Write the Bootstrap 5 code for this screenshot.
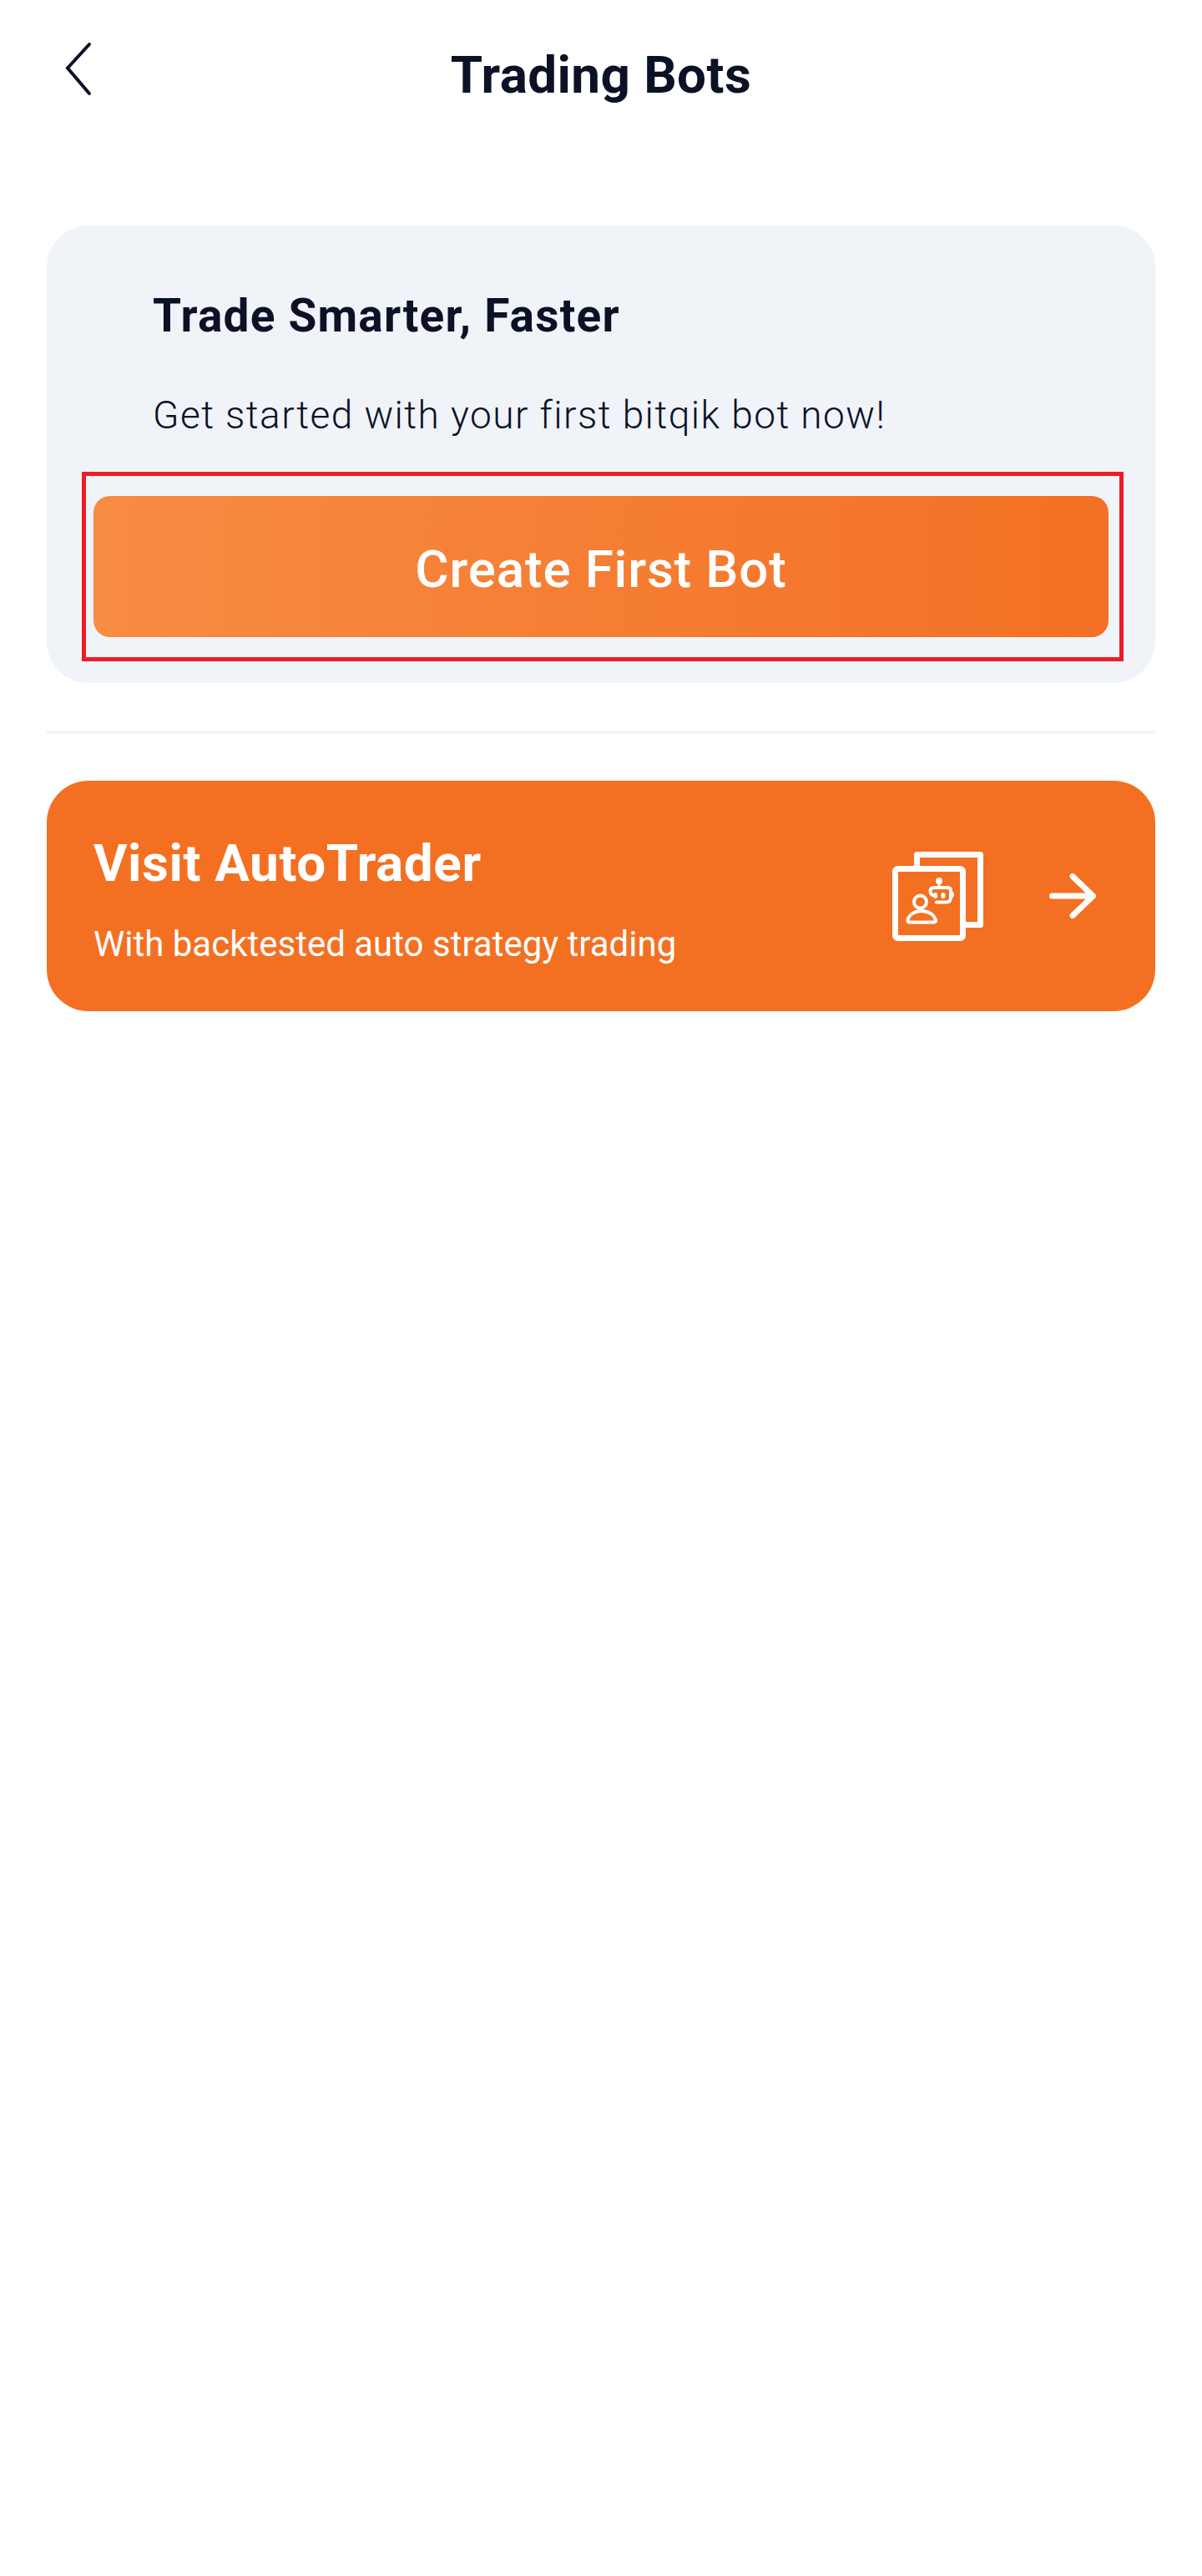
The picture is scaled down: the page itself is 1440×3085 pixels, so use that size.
<!DOCTYPE html>
<html lang="en">
<head>
    <meta charset="UTF-8">
    <meta name="viewport" content="width=device-width, initial-scale=1.0">
    <title>Trading Bots</title>
    <link rel="stylesheet" href="https://cdn.jsdelivr.net/npm/bootstrap@5.3.0/dist/css/bootstrap.min.css">
    <script src="https://cdn.jsdelivr.net/npm/bootstrap@5.3.0/dist/js/bootstrap.bundle.min.js"></script>
    <style>
        body { background: #fff; color: #0b1226; font-family: Roboto, "Liberation Sans", sans-serif; }
        .page-wrap { padding: 59px 56px 0; }
        .back-btn { position: absolute; left: 78px; top: 50px; line-height: 0; }
        .page-title { font-size: 62px; font-weight: 700; line-height: 1; margin: 0; letter-spacing: .4px; }
        .start-card { background: #f0f3f8; border-radius: 50px; height: 548px; margin-top: 149px; padding: 76px 56px 0; }
        .start-title { font-size: 55px; font-weight: 700; line-height: 64px; margin: 0 0 0 71px; letter-spacing: 1.2px; }
        .start-text { font-size: 46px; line-height: 56px; margin: 59px 0 0 71px; letter-spacing: 1.45px; font-weight: 300; }
        .create-btn { background: linear-gradient(90deg, #f78c43, #f37024); color: #fff; border: 0; border-radius: 20px; width: 100%; height: 169px; margin-top: 69px; padding-top: 12px; font-size: 62px; font-weight: 500; letter-spacing: .8px; }
        .create-btn:hover { background: linear-gradient(90deg, #f78c43, #f37024); color: #fff; }
        .red-mark { position: absolute; left: 98px; top: 565px; width: 1248px; height: 227px; border: 5px solid #ee1c25; pointer-events: none; }
        .rule-line { height: 4px; background: #f3f4f6; margin-top: 57px; }
        .auto-card { background: #f37022; color: #fff; border-radius: 50px; height: 276px; margin-top: 56px; padding: 0 71px 0 56px; }
        .auto-copy { margin-top: 8px; }
        .auto-title { font-size: 62px; font-weight: 700; line-height: 72px; letter-spacing: .6px; margin: 0; }
        .auto-text { font-size: 42px; line-height: 50px; margin: 36px 0 0; letter-spacing: 0; font-weight: 400; }
        .auto-icons { gap: 79px; }
    </style>
</head>
<body>
<div class="page-wrap position-relative">
    <a class="back-btn" href="#" aria-label="Back">
        <svg width="32" height="66" viewBox="0 0 32 66" fill="none" stroke="#0b1226" stroke-width="4" stroke-linecap="round" stroke-linejoin="miter">
            <path d="M29 3 L3 31.5 L29 62"/>
        </svg>
    </a>
    <div class="d-flex justify-content-center">
        <h1 class="page-title">Trading Bots</h1>
    </div>
    <div class="start-card">
        <h2 class="start-title">Trade Smarter, Faster</h2>
        <p class="start-text">Get started with your first bitqik bot now!</p>
        <button class="btn create-btn" type="button">Create First Bot</button>
    </div>
    <div class="red-mark"></div>
    <div class="rule-line"></div>
    <div class="auto-card d-flex align-items-center justify-content-between">
        <div class="auto-copy">
            <h2 class="auto-title">Visit AutoTrader</h2>
            <p class="auto-text">With backtested auto strategy trading</p>
        </div>
        <div class="auto-icons d-flex align-items-center">
            <svg width="109" height="107" viewBox="0 0 109 107" fill="none" stroke="#fff" stroke-width="7" stroke-linejoin="round" stroke-linecap="round">
                <path d="M29.5 17 V3.5 H105.5 V87.5 H88"/>
                <rect x="3.5" y="20.5" width="81" height="83" rx="3"/>
                <circle cx="33.5" cy="60" r="7.5" stroke-width="4"/>
                <path d="M20.5 84.5 H50 Q52.5 84.5 52 82 C50 75 43 71 35 71 C27 71 20 75 18.5 82 Q18 84.5 20.5 84.5 Z" stroke-width="4"/>
                <path d="M53 60.5 H64 Q70 60.5 70 55 V47 Q70 43 66 43 H50 Q45.5 43 45.5 47 Q45.5 50 48 52" stroke-width="4"/>
                <path d="M71.5 49 Q73.5 51 71.5 54" stroke-width="3"/>
                <path d="M56 38 V43" stroke-width="3"/>
                <circle cx="56" cy="35" r="4" fill="#fff" stroke="none"/>
                <rect x="49" y="49" width="5" height="7" rx="2.5" fill="#fff" stroke="none"/>
                <rect x="58.5" y="49" width="5" height="7" rx="2.5" fill="#fff" stroke="none"/>
            </svg>
            <svg width="56" height="54" viewBox="0 0 56 54" fill="none" stroke="#fff" stroke-width="7" stroke-linecap="round" stroke-linejoin="round">
                <path d="M3.5 27 H52 M28 3.5 L52.5 27 L28 50.5"/>
            </svg>
        </div>
    </div>
</div>
</body>
</html>
